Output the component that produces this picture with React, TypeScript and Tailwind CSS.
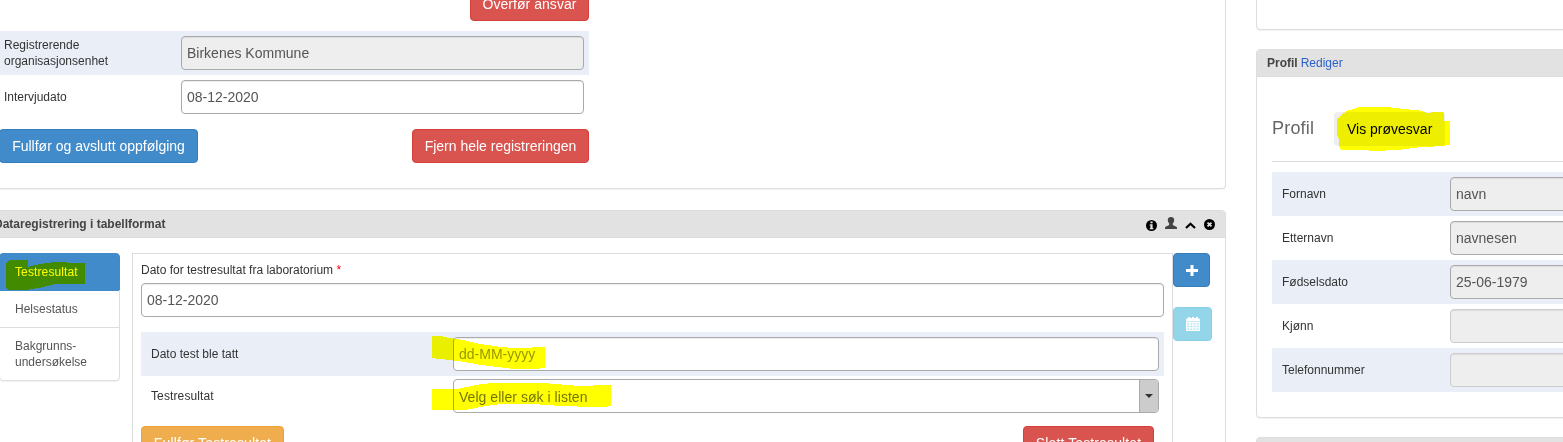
import type { ReactNode } from "react";
import clsx from "clsx";

const shadow = "shadow-[0_1px_1px_rgba(0,0,0,0.05)]";

function Field({ value, readOnly, faded }: { value?: string; readOnly?: boolean; faded?: boolean }) {
  return (
    <div
      className={clsx(
        "flex h-[34px] w-full items-center rounded-[4px] border px-[5px] text-[14px] leading-5 text-[#555] shadow-[inset_0_1px_1px_rgba(0,0,0,0.075)]",
        readOnly ? "bg-[#eee]" : "bg-white",
        faded ? "border-[#ccc]" : "border-[#aaa]",
      )}
    >
      {value}
    </div>
  );
}

function Button({
  children,
  tone,
  className,
}: {
  children: ReactNode;
  tone: "blue" | "red" | "orange" | "cyan";
  className?: string;
}) {
  return (
    <button
      className={clsx(
        "flex h-[34px] shrink-0 items-center justify-center rounded-[4px] border text-[14px] leading-5 whitespace-nowrap text-white",
        tone === "blue" && "border-[#357ebd] bg-[#428bca]",
        tone === "red" && "border-[#d43f3a] bg-[#d9534f]",
        tone === "orange" && "border-[#eea236] bg-[#f0ad4e]",
        tone === "cyan" && "border-[#46b8da] bg-[#5bc0de] opacity-65",
        className,
      )}
    >
      {children}
    </button>
  );
}

function InfoIcon() {
  return (
    <svg width="11" height="11" viewBox="0 0 10 10">
      <circle cx="5" cy="5" r="5" fill="#000" />
      <path d="M4 1.4h2v1.5H4zM3.4 3.8H6v3.4h.7v1.2H3.4V7.2H4V5h-.6z" fill="#e2e2e2" />
    </svg>
  );
}

function UserIcon() {
  return (
    <svg width="12" height="12" viewBox="0 0 12 12">
      <path
        d="M6 0c2 0 3.200 1.200 3.200 3.100 0 1.500-.6 2.700-1.400 3.500v1c0 .5.3.7.8.9l2.400 1.100c.7.300 1 .8 1 1.500V12H0v-.9c0-.7.3-1.200 1-1.500l2.400-1.100c.5-.2.8-.4.8-.9v-1C3.400 5.800 2.800 4.600 2.800 3.100 2.800 1.200 4 0 6 0z"
        fill="#444"
      />
    </svg>
  );
}

function ChevronUpIcon() {
  return (
    <svg width="11" height="7" viewBox="0 0 11 7">
      <path d="M1 6 5.500 1.700 10 6" fill="none" stroke="#000" strokeWidth="2.200" />
    </svg>
  );
}

function RemoveIcon() {
  return (
    <svg width="11" height="11" viewBox="0 0 10 10">
      <circle cx="5" cy="5" r="5" fill="#000" />
      <path d="m3.200 3.200 3.600 3.600M6.800 3.200 3.200 6.800" stroke="#e2e2e2" strokeWidth="1.600" />
    </svg>
  );
}

function PlusIcon() {
  return (
    <svg width="12" height="11" viewBox="0 0 12 11">
      <path d="M4.500 0h3v4H12v3H7.500v4h-3V7H0V4h4.500z" fill="#fff" />
    </svg>
  );
}

function CalendarIcon() {
  return (
    <svg width="14" height="14" viewBox="0 0 14 14">
      <path d="M2 0h2v1h2V0h2v1h2V0h2v1.200c1.300.2 2 .8 2 1.800v1.500H0V3c0-1 .700-1.600 2-1.800z" fill="#fff" />
      <path d="M0 5h14v9H0z" fill="#fff" />
      <path
        d="M1.200 6.200h2v1.400h-2zM4.400 6.200h2v1.400h-2zM7.600 6.200h2v1.400h-2zM10.800 6.200h2v1.400h-2zM1.200 8.800h2v1.400h-2zM4.400 8.800h2v1.400h-2zM7.600 8.800h2v1.400h-2zM10.800 8.800h2v1.400h-2zM1.200 11.400h2v1.400h-2zM4.400 11.400h2v1.400h-2zM7.600 11.400h2v1.400h-2zM10.800 11.400h2v1.400h-2z"
        fill="#5bc0de"
        opacity="0.75"
      />
    </svg>
  );
}

const profile = [
  { label: "Fornavn", value: "navn" },
  { label: "Etternavn", value: "navnesen" },
  { label: "Fødselsdato", value: "25-06-1979" },
  { label: "Kjønn", value: "" },
  { label: "Telefonnummer", value: "" },
];

function Highlights() {
  return (
    <svg
      className="pointer-events-none absolute inset-0 mix-blend-multiply"
      width="1563"
      height="442"
      viewBox="0 0 4689 1326"
      fill="#ff0"
      shapeRendering="crispEdges"
    >
      <polygon
        transform="translate(0 600)"
        points="18,192 24,184 30,180 84,180 84,200 115,193 150,188 165,185 200,185 203,189 255,189 255,252 165,252 145,257 125,262 98,267 75,270 24,269 18,262"
      />
      <polygon
        transform="translate(3720 0)"
        points="292,355 300,350 303,345 320,333 360,321 438,321 475,325 540,332 560,338 612,336 612,362 630,363 630,435 590,439 525,443 480,449 410,453 367,450 303,450 297,440 297,415 292,408"
      />
      <polygon
        transform="translate(1200 960)"
        points="96,47 130,47 130,51 158,55 184,59 230,70 290,79 330,83 395,84 395,81 435,81 435,144 405,147 340,147 310,143 250,136 180,124 140,119 96,114"
      />
      <polygon
        transform="translate(1200 960)"
        points="96,207 172,207 190,203 240,193 278,189 435,189 500,195 560,199 590,195 633,195 633,258 612,262 545,262 515,257 470,257 400,252 300,252 245,260 215,267 195,270 96,270"
      />
    </svg>
  );
}

export default function App() {
  return (
    <div className="relative isolate flex h-[442px] w-[1563px] items-start overflow-hidden bg-white font-['Liberation_Sans',Arial,sans-serif] text-[12px] leading-4 text-[#333]">
      <main className="-ml-[17px] w-[1243px] shrink-0">
        <section className={clsx("-mt-[14px] h-[203px] rounded-[4px] border border-[#ddd] bg-white pl-[15px]", shadow)}>
          <div className="w-[590px]">
            <div className="flex justify-end">
              <Button tone="red" className="w-[119px] tracking-[0.05px]">
                Overfør ansvar
              </Button>
            </div>
            <div className="mt-[10px] flex h-11 items-center bg-[#eaeff7] pr-[5px] pl-[5px]">
              <div className="w-[177px] shrink-0">
                Registrerende
                <br />
                organisasjonsenhet
              </div>
              <Field value="Birkenes Kommune" readOnly />
            </div>
            <div className="flex h-11 items-center pr-[5px] pl-[5px]">
              <div className="w-[177px] shrink-0">Intervjudato</div>
              <Field value="08-12-2020" />
            </div>
            <div className="mt-[10px] flex justify-between">
              <Button tone="blue" className="w-[199px]">
                Fullfør og avslutt oppfølging
              </Button>
              <Button tone="red" className="w-[177px]">
                Fjern hele registreringen
              </Button>
            </div>
          </div>
        </section>

        <section className={clsx("mt-[21px] h-[280px] rounded-[4px] border border-[#ddd] bg-white", shadow)}>
          <header className="flex h-[27px] items-center justify-between rounded-t-[3px] border-b border-[#ddd] bg-[#e2e2e2] pr-[10px] pl-[10px]">
            <h2 className="font-bold text-[#444]">Dataregistrering i tabellformat</h2>
            <div className="flex items-start">
              <span className="mt-[3px]">
                <InfoIcon />
              </span>
              <span className="ml-2">
                <UserIcon />
              </span>
              <span className="mt-[5px] ml-2">
                <ChevronUpIcon />
              </span>
              <span className="mt-[2px] ml-2">
                <RemoveIcon />
              </span>
            </div>
          </header>
          <div className="flex items-start pt-[15px] pl-[15px]">
            <nav className={clsx("w-[121px] shrink-0 rounded-[4px] text-[#555]", shadow)}>
              <div className="rounded-t-[4px] border border-[#428bca] bg-[#428bca] px-[15px] py-[10px] tracking-[0.12px] text-white">
                Testresultat
              </div>
              <div className="-mt-px border border-t-0 border-[#ddd] px-[15px] pt-[11px] pb-[10px]">Helsestatus</div>
              <div className="-mt-px rounded-b-[4px] border border-[#ddd] px-[15px] py-[10px]">
                Bakgrunns-
                <br />
                undersøkelse
              </div>
            </nav>
            <div className="ml-3 h-[220px] w-[1041px] shrink-0 border border-[#ddd] px-2 pt-2">
              <label className="block">
                Dato for testresultat fra laboratorium <span className="text-[#f00]">*</span>
              </label>
              <div className="mt-[5px]">
                <Field value="08-12-2020" />
              </div>
              <div className="mt-[15px] flex h-11 items-center bg-[#eaeff7] pr-[5px] pl-[10px]">
                <div className="w-[302px] shrink-0">Dato test ble tatt</div>
                <div className="flex h-[34px] w-full items-center rounded-[4px] border border-[#aaa] bg-white px-[5px] text-[14px] text-[#999] shadow-[inset_0_1px_1px_rgba(0,0,0,0.075)]">
                  dd-MM-yyyy
                </div>
              </div>
              <div className="flex h-10 items-center pr-[5px] pl-[10px]">
                <div className="w-[302px] shrink-0 tracking-[0.12px]">Testresultat</div>
                <div className="flex h-[34px] w-full items-stretch justify-between overflow-hidden rounded-[4px] border border-[#aaa] bg-white pl-[5px] text-[14px] text-[#777]">
                  <span className="self-center pt-[2px] tracking-[0.04px]">Velg eller søk i listen</span>
                  <span className="flex w-[19px] items-center justify-center border-l border-[#aaa] bg-[#ccc]">
                    <svg width="8" height="4" viewBox="0 0 8 4">
                      <path d="M0 0h8L4 4z" fill="#333" />
                    </svg>
                  </span>
                </div>
              </div>
              <div className="mt-[10px] flex justify-between pr-[10px]">
                <Button tone="orange" className="w-[143px] tracking-[0.12px]">
                  Fullfør Testresultat
                </Button>
                <Button tone="red" className="w-[131px] tracking-[0.12px]">
                  Slett Testresultat
                </Button>
              </div>
            </div>
            <div className="flex flex-col items-start gap-5">
              <Button tone="blue" className="w-[37px]">
                <PlusIcon />
              </Button>
              <Button tone="cyan" className="w-[39px]">
                <CalendarIcon />
              </Button>
            </div>
          </div>
        </section>
      </main>

      <aside className="ml-[30px] w-[400px] shrink-0">
        <section className={clsx("-mt-[10px] h-[40px] rounded-[4px] border border-[#ddd] bg-white", shadow)} />
        <section className={clsx("mt-[19px] h-[369px] rounded-[4px] border border-[#ddd] bg-white", shadow)}>
          <header className="flex h-[27px] items-center gap-[3px] rounded-t-[3px] border-b border-[#ddd] bg-[#e2e2e2] px-[10px]">
            <h2 className="font-bold text-[#444]">Profil</h2>
            <a className="text-[#2a5fc9]">Rediger</a>
          </header>
          <div className="px-[15px] pt-[35px]">
            <div className="flex h-[50px] items-start border-b border-[#ddd]">
              <h3 className="w-[62px] pt-[6px] text-[18px] leading-5 tracking-[0.2px] text-[#666]">Profil</h3>
              <button className="flex h-[34px] items-center rounded-[4px] bg-[#eee] px-[13px] text-[14px] text-black">
                Vis prøvesvar
              </button>
            </div>
            <div className="mt-[10px]">
              {profile.map((row, i) => (
                <div
                  key={row.label}
                  className={clsx("flex h-11 items-center pr-[5px] pl-[10px]", i % 2 === 0 && "bg-[#eaeff7]")}
                >
                  <div className="w-[168px] shrink-0">{row.label}</div>
                  <Field value={row.value} readOnly faded={!row.value} />
                </div>
              ))}
            </div>
          </div>
        </section>
        <section className="mt-[19px] h-[60px] rounded-[4px] border border-[#ddd] bg-[#e2e2e2]" />
      </aside>

      <Highlights />
    </div>
  );
}
